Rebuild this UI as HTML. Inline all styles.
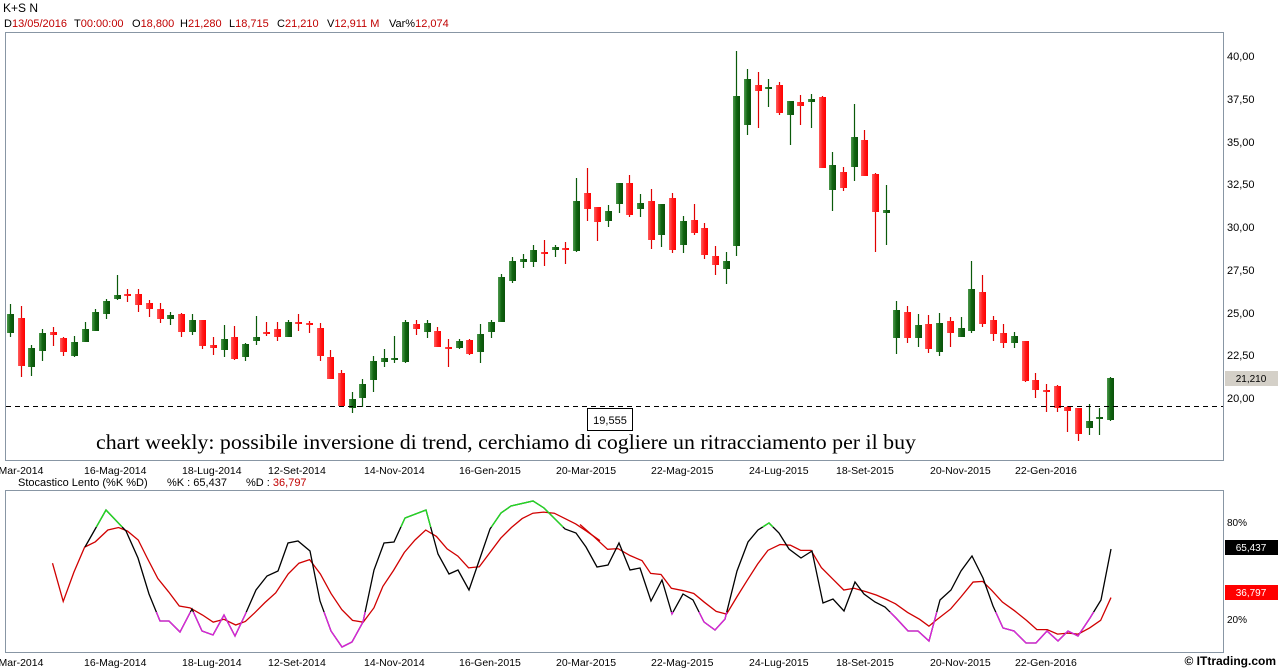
<!DOCTYPE html>
<html><head><meta charset="utf-8">
<style>
html,body{margin:0;padding:0;background:#fff;width:1278px;height:668px;overflow:hidden}
svg text{font-family:"Liberation Sans",Arial,sans-serif;font-size:11px}
</style></head>
<body>
<svg id="s" width="1278" height="668" xmlns="http://www.w3.org/2000/svg">
<defs>
<linearGradient id="gg" x1="0" x2="1"><stop offset="0" stop-color="#4f9a4f"/><stop offset="0.5" stop-color="#0f640f"/><stop offset="1" stop-color="#0a500a"/></linearGradient>
<linearGradient id="rg" x1="0" x2="1"><stop offset="0" stop-color="#ff6060"/><stop offset="0.5" stop-color="#ff1a1a"/><stop offset="1" stop-color="#f00"/></linearGradient>
<clipPath id="cg"><rect x="0" y="480" width="1224" height="47"/></clipPath>
<clipPath id="cm"><rect x="0" y="612" width="1224" height="50"/></clipPath>
</defs>
<text x="3" y="12" style="font-size:12px">K+S N</text>
<g style="font-size:11.5px">
<text x="4" y="27">D<tspan fill="#c00000">13/05/2016</tspan></text>
<text x="74" y="27">T<tspan fill="#c00000">00:00:00</tspan></text>
<text x="132" y="27">O<tspan fill="#c00000">18,800</tspan></text>
<text x="180" y="27">H<tspan fill="#c00000">21,280</tspan></text>
<text x="229" y="27">L<tspan fill="#c00000">18,715</tspan></text>
<text x="277" y="27">C<tspan fill="#c00000">21,210</tspan></text>
<text x="327" y="27">V<tspan fill="#c00000">12,911 M</tspan></text>
<text x="389" y="27">Var%<tspan fill="#c00000">12,074</tspan></text>
</g>
<rect x="5.5" y="32.5" width="1218" height="428" fill="none" stroke="#8896a4"/>
<rect x="5.5" y="490.5" width="1218" height="162" fill="none" stroke="#8896a4"/>
<g id="cand"></g>
<line x1="6" y1="406.5" x2="1223" y2="406.5" stroke="#000" stroke-dasharray="5,4"/>
<rect x="587.5" y="408.5" width="45" height="22" fill="#fff" stroke="#000"/>
<text x="610" y="424" text-anchor="middle">19,555</text>
<text x="96" y="449" textLength="820" lengthAdjust="spacingAndGlyphs" style="font-family:'Liberation Serif',serif;font-size:21px">chart weekly: possibile inversione di trend, cerchiamo di cogliere un ritracciamento per il buy</text>
<g style="font-size:10px">
<text x="1227" y="60">40,00</text><text x="1227" y="103">37,50</text><text x="1227" y="146">35,00</text>
<text x="1227" y="188">32,50</text><text x="1227" y="231">30,00</text><text x="1227" y="274">27,50</text>
<text x="1227" y="317">25,00</text><text x="1227" y="359">22,50</text><text x="1227" y="402">20,00</text>
</g>
<rect x="1225" y="371" width="53" height="15" fill="#d4d0c8"/>
<text x="1251" y="382" text-anchor="middle" style="font-size:10px">21,210</text>
<g id="xl1"></g><g id="xl2"></g>
<text x="18" y="486" style="font-size:11px">Stocastico Lento (%K %D)</text>
<text x="167" y="486" style="font-size:11px">%K :  65,437</text>
<text x="246" y="486" style="font-size:11px">%D :  <tspan fill="#c00000">36,797</tspan></text>
<text x="1227" y="526" style="font-size:10px">80%</text>
<text x="1227" y="623" style="font-size:10px">20%</text>
<rect x="1225" y="540" width="53" height="15" fill="#000"/>
<text x="1251" y="551" text-anchor="middle" fill="#fff" style="font-size:10px">65,437</text>
<rect x="1225" y="585" width="53" height="15" fill="#f00"/>
<text x="1251" y="596" text-anchor="middle" fill="#fff" style="font-size:10px">36,797</text>
<text x="1276" y="665" text-anchor="end" style="font-size:12px;font-weight:bold">© ITtrading.com</text>
<g fill="none" stroke-width="1.3">
<g transform="translate(40,490) scale(0.35714)">
<polyline vector-effect="non-scaling-stroke" stroke="#d00000" points="35,205 65,312 95,230 125,160 155,145 190,112 220,105 245,115 275,140 300,190 330,248 360,285 390,325 420,330 455,350 485,370 515,362 548,378 575,368 600,345 630,315 660,288 695,235 725,205 755,195 785,235 815,290 845,335 875,365 905,370 935,330 960,270 990,225 1020,175 1050,140 1080,112 1110,130 1140,165 1170,185 1200,218 1230,215 1260,175 1290,135 1320,105 1350,80 1380,65 1410,62 1440,65 1470,80 1500,95 1530,115 1568,142"/>
</g>
<g transform="translate(580,490) scale(0.3448)">
<polyline vector-effect="non-scaling-stroke" stroke="#d00000" points="0,100 40,135 80,172 110,170 145,190 180,205 205,242 235,245 265,285 300,292 330,300 360,325 395,352 425,360 455,310 485,262 515,215 545,175 580,158 610,160 640,175 670,175 700,225 735,260 765,290 795,285 830,295 860,305 890,318 915,330 950,355 985,375 1012,395 1030,380 1075,345 1105,310 1140,267 1168,265 1195,292 1225,325 1260,350 1295,378 1325,405 1355,405 1385,418 1415,415 1445,418 1478,400 1510,378 1540,312"/>
</g>
<g id="kk">
<polyline stroke="#000" points="85,547 106,510 126,531 138,558 149,594 160,621 169,621 180,632 192,609 202,631 213,635 224,615 235,636 245,615 256,590 267,576 278,571 288,543 298,541 310,551 320,601 331,631 342,647 352,642 363,622 374,570 384,543 394,542 405,518 426,510 438,554 449,574 458,570 469,590 479,561 490,529 501,513 511,506 533,501 544,508 565,529 576,533 586,547 597,567 608,565 619,543 630,570 640,568 651,601 662,580 672,614 683,594 693,600 704,622 715,630 725,619 737,571 748,542 758,530 769,523 779,533 789,549 801,558 812,551 823,603 833,599 844,611 855,582 864,594 875,602 885,607 896,618 908,631 918,631 929,641 940,600 951,590 961,571 972,556 983,578 993,606 1003,628 1014,631 1026,643 1036,643 1047,631 1058,641 1068,631 1078,636 1090,618 1101,600 1111,549"/>
</g>
</g>
</svg>
<script>
var C=[
[0,'G',314,333,304,337],[1,'R',318,366,306,377],[2,'G',348,367,345,376],[3,'G',333,351,329,361],[4,'R',332,335,327,346],[5,'R',338,352,337,356],[6,'G',342,356,336,357],[7,'G',329,342,322,342],[8,'G',312,331,309,331],[9,'G',301,314,299,319],[10,'G',295,299,275,300],[11,'R',294,296,289,302],[12,'R',294,305,289,312],[13,'R',303,309,300,317],[14,'R',309,319,303,323],[15,'G',315,319,312,325],[16,'R',314,332,313,337],[17,'G',320,332,314,335],[18,'R',320,346,320,349],[19,'R',345,348,337,355],[20,'G',339,350,325,357],[21,'R',337,359,326,360],[22,'G',344,357,343,361],[23,'G',337,341,316,345],[24,'R',332,334,322,336],[25,'R',329,337,322,341],[26,'G',322,337,320,337],[27,'R',322,324,314,331],[28,'R',323,325,321,333],[29,'R',328,356,323,361],[30,'R',357,379,350,379],[31,'R',373,406,370,406],[32,'G',399,408,392,413],[33,'G',384,398,379,407],[34,'G',361,380,356,392],[35,'G',358,362,349,367],[36,'G',358,360,336,363],[37,'G',322,362,320,363],[38,'R',324,329,320,335],[39,'G',323,332,320,338],[40,'R',331,347,327,347],[41,'R',347,349,339,367],[42,'G',341,348,339,349],[43,'R',340,354,339,355],[44,'G',334,352,324,363],[45,'G',322,332,320,338],[46,'G',277,322,274,322],[47,'G',261,281,257,283],[48,'G',259,262,254,268],[49,'G',250,262,245,267],[50,'R',252,254,240,266],[51,'G',247,250,245,257],[52,'R',248,250,242,264],[53,'G',201,251,178,252],[54,'R',193,209,168,221],[55,'R',207,222,207,241],[56,'G',211,221,205,227],[57,'G',183,204,183,213],[58,'R',183,215,175,217],[59,'G',203,209,194,217],[60,'R',201,240,189,249],[61,'G',204,235,204,247],[62,'R',198,250,193,253],[63,'G',221,245,216,253],[64,'R',220,233,204,235],[65,'R',228,255,223,259],[66,'R',256,265,246,275],[67,'G',261,269,252,284],[68,'G',96,246,51,256],[69,'G',79,125,69,135],[70,'R',85,91,72,128],[71,'G',87,89,79,107],[72,'R',85,113,82,115],[73,'G',101,115,101,145],[74,'R',102,106,95,125],[75,'G',99,102,94,128],[76,'R',97,168,96,168],[77,'G',165,190,152,211],[78,'R',172,188,167,191],[79,'G',137,167,104,181],[80,'R',140,176,130,176],[81,'R',174,212,173,252],[82,'G',210,213,185,245],[83,'G',310,338,301,354],[84,'R',312,338,306,343],[85,'G',325,338,314,347],[86,'R',324,349,315,353],[87,'G',323,352,313,356],[88,'R',321,333,317,347],[89,'G',328,337,317,337],[90,'G',289,331,261,333],[91,'R',292,324,275,327],[92,'R',320,334,316,341],[93,'R',333,343,324,348],[94,'G',336,343,332,348],[95,'R',341,381,341,382],[96,'R',380,390,373,398],[97,'R',390,392,384,412],[98,'R',386,408,385,412],[99,'R',407,411,406,432],[100,'R',408,434,408,441],[101,'G',421,428,404,435],[102,'G',417,418,408,435],[103,'G',378,420,377,421]];
var h='';
C.forEach(function(c){var x=Math.round(10+c[0]*10.68);var g=c[1]=='G';
h+='<line x1="'+(x+0.5)+'" y1="'+c[4]+'" x2="'+(x+0.5)+'" y2="'+c[5]+'" stroke="'+(g?'#0a5a0a':'#e00000')+'" stroke-width="1.2"/>';
var hh=Math.max(2,c[3]-c[2]);
h+='<rect x="'+(x-3)+'" y="'+c[2]+'" width="7" height="'+hh+'" fill="url(#'+(g?'gg':'rg')+')"/>';});
document.getElementById('cand').innerHTML=h;
var L=[[-5,'-Mar-2014'],[84,'16-Mag-2014'],[182,'18-Lug-2014'],[268,'12-Set-2014'],[364,'14-Nov-2014'],[459,'16-Gen-2015'],[556,'20-Mar-2015'],[651,'22-Mag-2015'],[749,'24-Lug-2015'],[836,'18-Set-2015'],[930,'20-Nov-2015'],[1015,'22-Gen-2016']];
var a='',b='';L.forEach(function(l){a+='<text x="'+l[0]+'" y="474" style="font-size:10.5px">'+l[1]+'</text>';b+='<text x="'+l[0]+'" y="666" style="font-size:10.5px">'+l[1]+'</text>';});
document.getElementById('xl1').innerHTML=a;document.getElementById('xl2').innerHTML=b;
var k=document.querySelector('#kk polyline');var p=k.getAttribute('points');
document.getElementById('kk').innerHTML+='<polyline fill="none" stroke-width="1.3" stroke="#22dd22" clip-path="url(#cg)" points="'+p+'"/><polyline fill="none" stroke-width="1.3" stroke="#dd22dd" clip-path="url(#cm)" points="'+p+'"/>';
</script>
</body></html>
